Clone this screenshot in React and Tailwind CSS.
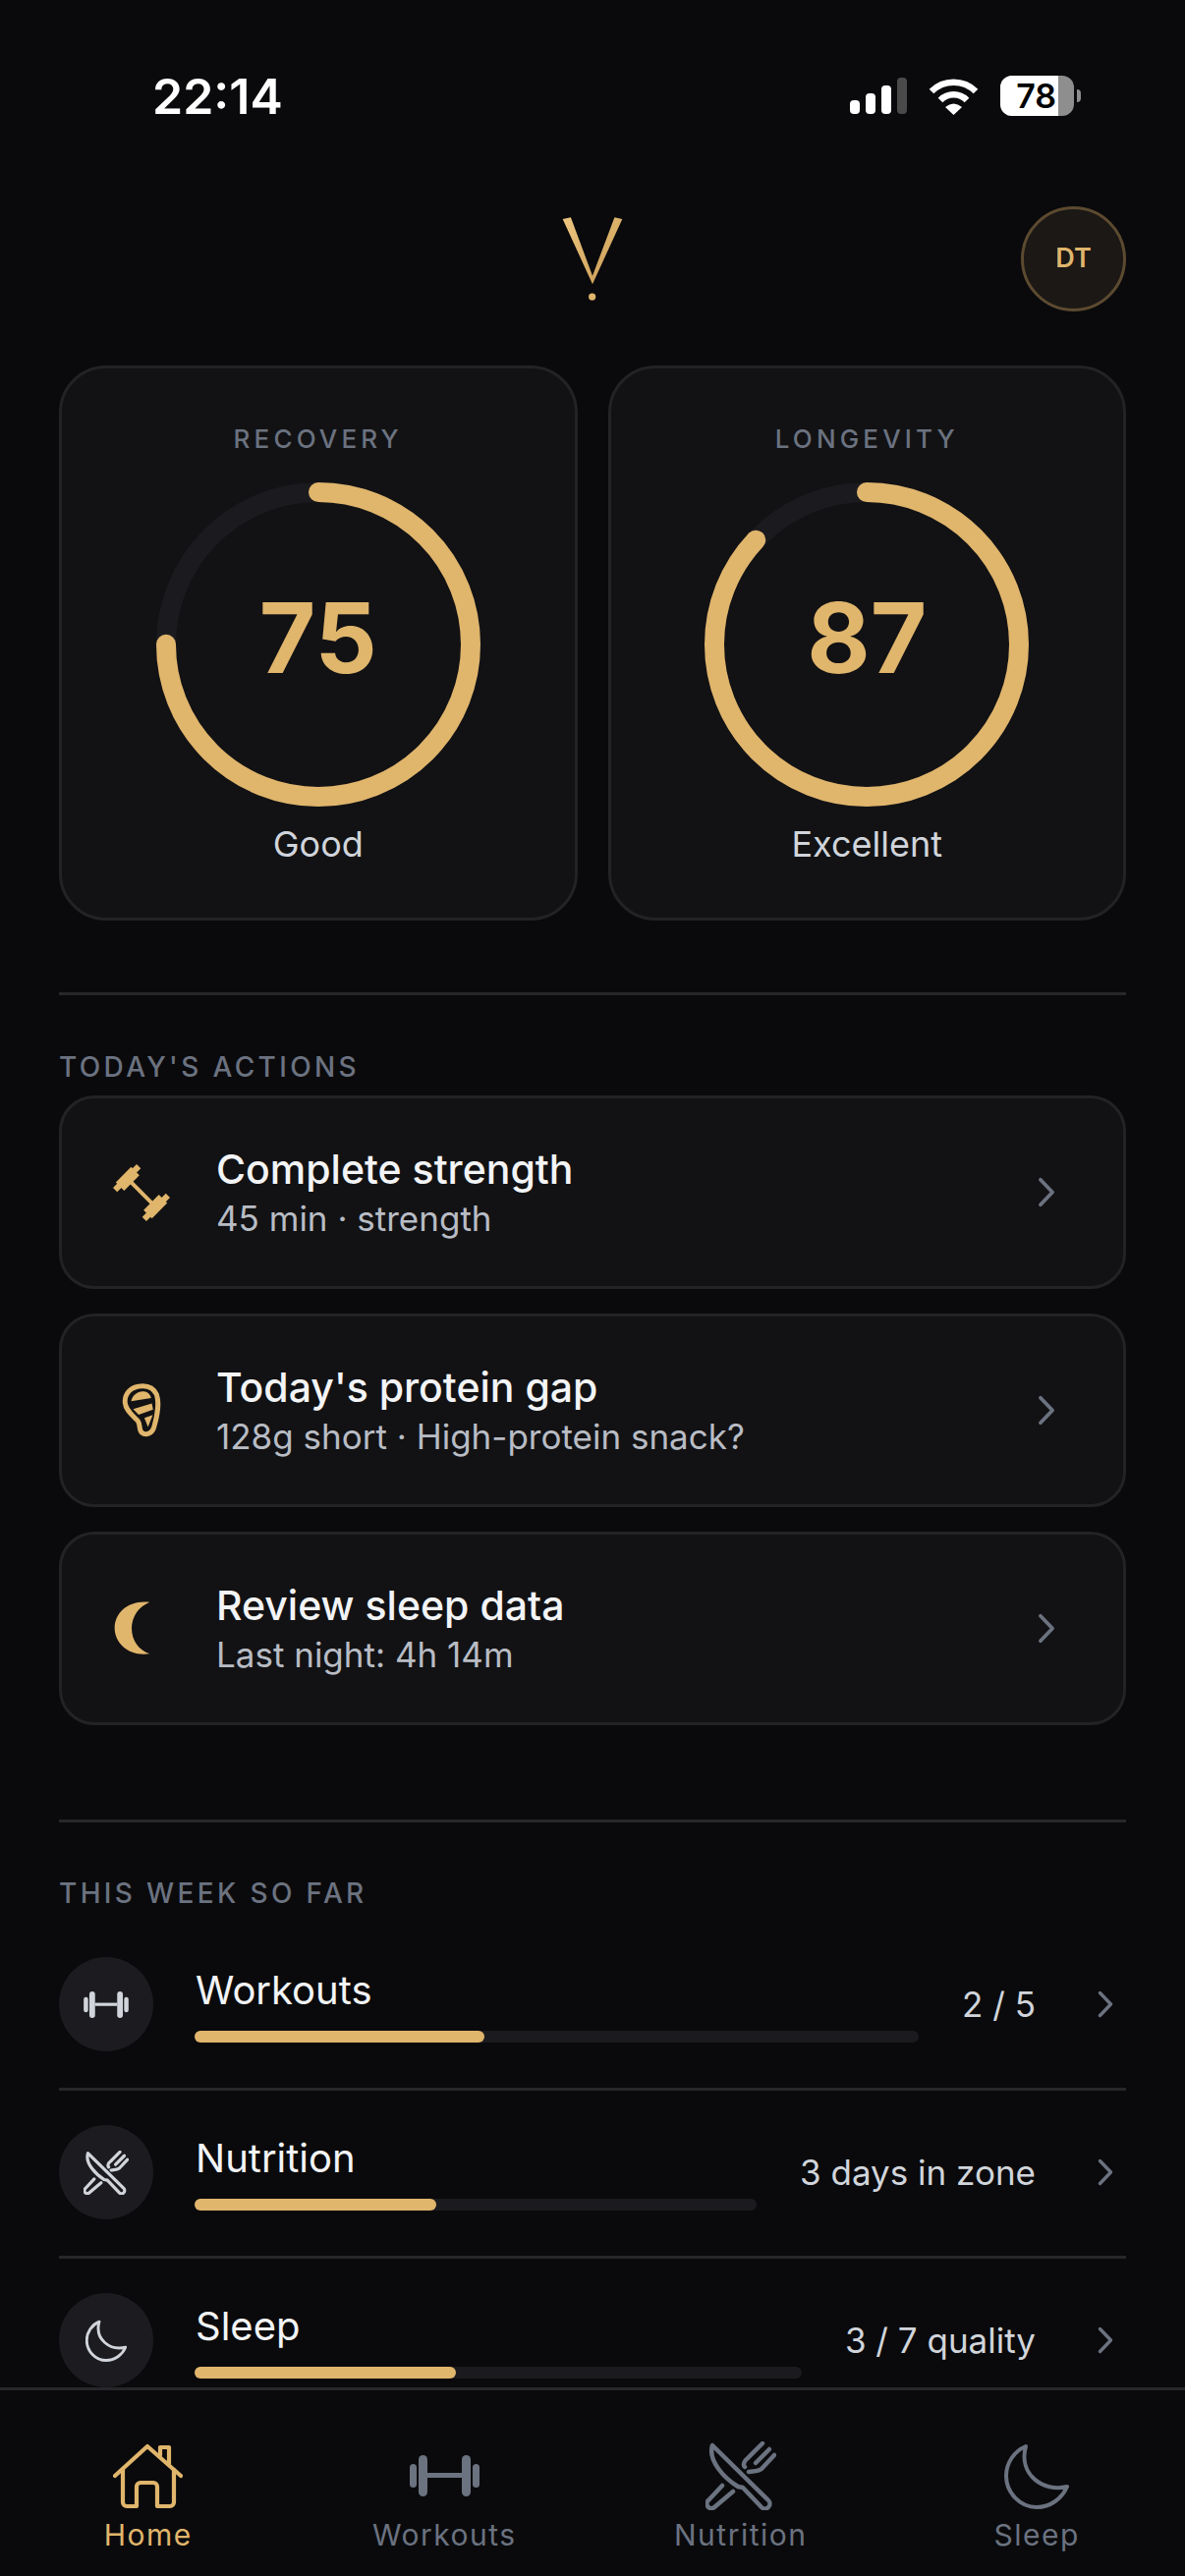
const Chevron = ({ c = "w-[18px] h-[31px]" }) => (
  <svg viewBox="0 0 16 28" className={c} fill="none" stroke="#6b7280" strokeWidth="3.4" strokeLinecap="round" strokeLinejoin="round">
    <path d="M2.500 2.500 L13.500 14 L2.500 25.500" />
  </svg>
);

const Ring = ({ pct, value }) => {
  const r = 155;
  const circ = 2 * Math.PI * r;
  return (
    <div className="relative w-[330px] h-[330px] mt-[29px]">
      <svg viewBox="0 0 330 330" className="w-[330px] h-[330px] -rotate-90" fill="none" strokeWidth="20">
        <circle cx="165" cy="165" r={r} stroke="#1b1b1f" />
        <circle cx="165" cy="165" r={r} stroke="#e0b56c" strokeLinecap="round" strokeDasharray={`${circ * pct} ${circ}`} />
      </svg>
      <div className="absolute inset-0 flex items-center justify-center pb-[14px] text-[99px] leading-none font-bold text-[#e0b56c]">{value}</div>
    </div>
  );
};

const ScoreCard = ({ label, pct, value, note }) => (
  <div className="flex-1 h-[565px] rounded-[48px] bg-[#121214] border-[3px] border-[#232326] flex flex-col items-center pt-[57px]">
    <div className="text-[26px] leading-[30px] font-medium tracking-[0.16em] text-[#6b7280]">{label}</div>
    <Ring pct={pct} value={value} />
    <div className="mt-[18px] text-[36px] leading-[40px] text-[#d1d5db]">{note}</div>
  </div>
);

const Barbell = () => (
  <svg viewBox="0 0 60 60" className="w-[60px] h-[60px]" fill="#e0b56c">
    <g transform="rotate(45 30 30)">
      <rect x="8" y="28" width="44" height="4" />
      <rect x="4" y="19" width="12" height="22" />
      <rect x="6" y="13" width="6" height="34" />
      <rect x="44" y="19" width="12" height="22" />
      <rect x="48" y="13" width="6" height="34" />
    </g>
  </svg>
);

const Protein = () => (
  <svg viewBox="100 115 125 170" className="w-[41px] h-[56px]" fill="#e0b56c">
    <path d="M165 123 C125 123 108 150 110 175 C112 200 135 215 150 232 C158 243 152 258 162 268 C175 278 195 270 200 250 C212 210 215 170 208 150 C200 132 185 123 165 123 Z" fill="none" stroke="#e0b56c" strokeWidth="15" strokeLinejoin="round" />
    <path d="M129 170 C132 152 150 138 168 140 C180 141 188 148 191 160 Z" />
    <path d="M135 195 L193 177 L197 196 L152 212 Z" />
    <path d="M170 222 L196 213 L181 250 Z" />
  </svg>
);

const MoonFill = () => (
  <svg viewBox="72 84 180 180" className="w-[60px] h-[60px]" fill="#e0b56c">
    <path d="M187 92 C120 85 80 125 80 172 C80 218 125 260 187 250 C155 240 132 210 132 172 C132 135 155 105 187 92 Z" />
  </svg>
);

const Dumbbell = ({ c, color }) => (
  <svg viewBox="0 0 71 42" className={c} fill={color}>
    <rect x="0" y="9" width="7" height="24" rx="3.500" />
    <rect x="9" y="0" width="9" height="42" rx="4.500" />
    <rect x="18" y="18" width="35" height="5" />
    <rect x="53" y="0" width="9" height="42" rx="4.500" />
    <rect x="64" y="9" width="7" height="24" rx="3.500" />
  </svg>
);

const Utensils = ({ c, color, sw = 4.500 }) => (
  <svg viewBox="0 0 72 70" className={c} fill="none" stroke={color} strokeWidth={sw} strokeLinecap="round" strokeLinejoin="round">
    <path d="M7 4 L64 60 A4.500 4.500 0 0 1 57 67 L38 47 L33 46 C20 38 2 20 7 4 Z" />
    <path d="M17 45 L3 60 A4.500 4.500 0 0 0 9 67 L28 51" />
    <path d="M58 2 L43 17 C39 20 38 24 40 26" />
    <path d="M65 8 L51 22" />
    <path d="M70 14 L57 28 C53 31 48 30 44 31" />
  </svg>
);

const MoonLine = ({ c, color, sw = 4 }) => (
  <svg viewBox="0 0 66 67" className={c} fill="none" stroke={color} strokeWidth={sw} strokeLinejoin="round">
    <path d="M22 3 C10 8 2 20 2 33 C2 50 16 65 33 65 C47 65 59 56 64 44 C40 50 14 32 22 3 Z" />
  </svg>
);

const House = ({ c, color }) => (
  <svg viewBox="0 0 71 67" className={c} fill="none" stroke={color} strokeWidth="4.200" strokeLinecap="round" strokeLinejoin="round">
    <path d="M2 33 L35 3 L69 33" />
    <path d="M10 27 V60 A4 4 0 0 0 14 64 H24 V44 A4 4 0 0 1 28 40 H41 A4 4 0 0 1 45 44 V64 H58 A4 4 0 0 0 62 60 V27" />
    <path d="M48 12 V4 H57 V21" />
  </svg>
);

const ActionCard = ({ icon, title, sub }) => (
  <div className="h-[197px] rounded-[36px] bg-[#121214] border-[3px] border-[#232326] flex items-center pr-[69px]">
    <div className="w-[157px] flex justify-center shrink-0 pl-[5px]">
      <div className="w-[60px] h-[60px] flex items-center justify-center">{icon}</div>
    </div>
    <div className="flex-1 flex flex-col pt-[2px]">
      <div className="text-[41px] leading-[50px] font-medium text-[#f3f4f6]">{title}</div>
      <div className="text-[35px] leading-[50px] text-[#b8bcc4]">{sub}</div>
    </div>
    <Chevron />
  </div>
);

const WeekRow = ({ icon, title, pct, value, last }) => (
  <div className={`flex items-center pt-[35px] pb-[37px] ${last ? "" : "border-b-[3px] border-[#27272a]"}`}>
    <div className="w-[96px] h-[96px] rounded-full bg-[#1c1c20] flex items-center justify-center shrink-0">{icon}</div>
    <div className="flex-1 ml-[42px] flex flex-col">
      <div className="text-[40px] leading-[48px] text-[#f3f4f6] pl-[1px]">{title}</div>
      <div className="mt-[17px] h-[12px] rounded-full bg-[#1b1b1f]">
        <div className="h-[12px] rounded-full bg-[#e0b56c]" style={{ width: pct }} />
      </div>
    </div>
    <div className="ml-[44px] text-[35px] leading-[48px] text-[#d1d5db] whitespace-nowrap">{value}</div>
    <div className="ml-[63px] mr-[13px] flex"><Chevron c="w-[16px] h-[28px]" /></div>
  </div>
);

const Tab = ({ icon, label, active }) => (
  <div className="flex flex-col items-center">
    <div className="h-[72px] flex items-center justify-center">{icon}</div>
    <div className={`mt-[6px] text-[30px] leading-[36px] tracking-[0.05em] ${active ? "text-[#e0b56c]" : "text-[#6b7280]"}`}>{label}</div>
  </div>
);

export default function App() {
  return (
    <div className="w-[1206px] h-[2622px] bg-[#0a0a0c] flex flex-col overflow-hidden [font-family:Inter,sans-serif]">
      <div className="flex-1 min-h-0 overflow-hidden">
        <div className="h-[210px] flex items-start justify-between pt-[70px] pl-[155px] pr-[106px]">
          <div className="text-[50px] leading-[56px] font-semibold text-white">22:14</div>
          <div className="flex items-center gap-[22px] mt-[7px]">
            <div className="flex items-end gap-[6px] h-[37px]">
              <div className="w-[10px] h-[14px] rounded-[4px] bg-white" />
              <div className="w-[10px] h-[21px] rounded-[4px] bg-white" />
              <div className="w-[10px] h-[29px] rounded-[4px] bg-white" />
              <div className="w-[10px] h-[37px] rounded-[4px] bg-[#4a4a4a]" />
            </div>
            <svg viewBox="0 0 51 38" className="w-[51px] h-[38px]" fill="white">
              <path d="M3 14 A32 32 0 0 1 48 14" fill="none" stroke="white" strokeWidth="6.500" />
              <path d="M12 23 A19 19 0 0 1 39 23" fill="none" stroke="white" strokeWidth="6.500" />
              <path d="M17 30 Q25.500 23 34 30 L25.500 38 Z" />
            </svg>
            <div className="flex items-center gap-[3px]">
              <div className="w-[75px] h-[41px] rounded-[12px] overflow-hidden bg-[#8e8e8e] flex">
                <div className="w-[59px] h-[41px] bg-white flex items-center justify-end pr-[2px] text-[34px] font-semibold text-black">78</div>
              </div>
              <div className="w-[4px] h-[13px] rounded-r-full bg-[#8e8e8e]" />
            </div>
          </div>
        </div>

        <div className="px-[60px]">
          <div className="h-[107px] flex justify-end relative">
            <svg viewBox="90 85 200 270" className="absolute left-[510px] top-[9px] w-[66px] h-[89px]">
              <defs>
                <linearGradient id="g" x1="0" y1="0" x2="1" y2="1">
                  <stop offset="0" stopColor="#edc67f" />
                  <stop offset="1" stopColor="#c89a52" />
                </linearGradient>
              </defs>
              <path d="M98 97 L123 92 L190 272 L258 92 L282 97 L190 298 Z" fill="url(#g)" />
              <circle cx="189" cy="337" r="11" fill="#e0b56c" />
            </svg>
            <div className="w-[107px] h-[107px] rounded-full bg-[#1b1815] border-[3px] border-[#5c4a30] flex items-center justify-center text-[27px] font-semibold text-[#e0b56c]">DT</div>
          </div>

          <div className="mt-[55px] flex gap-[31px]">
            <ScoreCard label="RECOVERY" pct={0.75} value="75" note="Good" />
            <ScoreCard label="LONGEVITY" pct={0.87} value="87" note="Excellent" />
          </div>

          <div className="mt-[73px] h-[3px] bg-[#27272a]" />

          <div className="mt-[57px] h-[32px] text-[28px] leading-[32px] font-medium tracking-[0.12em] text-[#6b7280]">TODAY'S ACTIONS</div>
          <div className="mt-[13px] flex flex-col gap-[25px]">
            <ActionCard icon={<Barbell />} title="Complete strength" sub="45 min · strength" />
            <ActionCard icon={<Protein />} title="Today's protein gap" sub="128g short · High-protein snack?" />
            <ActionCard icon={<MoonFill />} title="Review sleep data" sub="Last night: 4h 14m" />
          </div>

          <div className="mt-[96px] h-[3px] bg-[#27272a]" />

          <div className="mt-[56px] h-[32px] text-[28px] leading-[32px] font-medium tracking-[0.12em] text-[#6b7280]">THIS WEEK SO FAR</div>
          <div className="mt-[14px]">
            <WeekRow icon={<Dumbbell c="w-[46px] h-[27px]" color="#d1d5db" />} title="Workouts" pct="40%" value="2 / 5" />
            <WeekRow icon={<Utensils c="w-[46px] h-[45px]" color="#d1d5db" sw={5} />} title="Nutrition" pct="43%" value="3 days in zone" />
            <WeekRow icon={<MoonLine c="w-[42px] h-[43px]" color="#d1d5db" sw={4.500} />} title="Sleep" pct="43%" value="3 / 7 quality" last />
          </div>
        </div>
      </div>

      <div className="h-[192px] shrink-0 border-t-[3px] border-[#27272a] bg-[#0a0a0c] grid grid-cols-4 pt-[51px]">
        <Tab active label="Home" icon={<House c="w-[71px] h-[67px]" color="#e0b56c" />} />
        <Tab label="Workouts" icon={<Dumbbell c="w-[71px] h-[42px]" color="#6b7280" />} />
        <Tab label="Nutrition" icon={<Utensils c="w-[72px] h-[70px]" color="#6b7280" />} />
        <Tab label="Sleep" icon={<MoonLine c="w-[66px] h-[67px]" color="#6b7280" />} />
      </div>
    </div>
  );
}
